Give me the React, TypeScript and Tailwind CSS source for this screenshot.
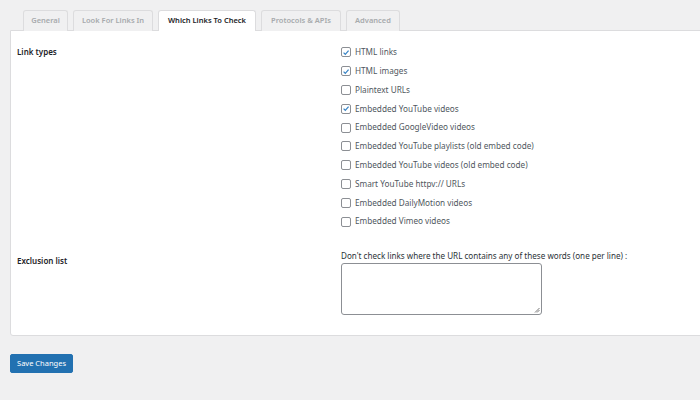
import React from 'react';

const tabs = [
  { label: 'General', w: 'w-[45px]' },
  { label: 'Look For Links In', w: 'w-[80px]' },
  { label: 'Which Links To Check', w: 'w-[98px]', active: true },
  { label: 'Protocols & APIs', w: 'w-[80px]' },
  { label: 'Advanced', w: 'w-[54px]' },
];

const linkTypes = [
  { label: 'HTML links', checked: true },
  { label: 'HTML images', checked: true },
  { label: 'Plaintext URLs' },
  { label: 'Embedded YouTube videos', checked: true },
  { label: 'Embedded GoogleVideo videos' },
  { label: 'Embedded YouTube playlists (old embed code)' },
  { label: 'Embedded YouTube videos (old embed code)' },
  { label: 'Smart YouTube httpv:// URLs' },
  { label: 'Embedded DailyMotion videos' },
  { label: 'Embedded Vimeo videos' },
];

const Checkbox: React.FC<{ checked?: boolean }> = ({ checked }) => (
  <span className="flex h-[10px] w-[10px] shrink-0 items-center justify-center rounded-[2px] border border-[#8c8f94] bg-white">
    {checked && (
      <svg viewBox="0 0 10 10" className="h-[9px] w-[9px]">
        <path d="M2 5.2 L4.1 7.3 L8.2 2.6" fill="none" stroke="#3582c4" strokeWidth="1.5" />
      </svg>
    )}
  </span>
);

export default function App() {
  return (
    <div
      className="h-[400px] w-[700px] overflow-hidden bg-[#f0f0f1] text-[#1d2327]"
      style={{ fontFamily: '"Noto Sans", "Open Sans", sans-serif' }}
    >
      {/* Tabs */}
      <div className="flex gap-[5px] pl-[23px] pt-[10px]">
        {tabs.map((t) => (
          <div
            key={t.label}
            className={
              'flex h-[21px] items-center justify-center rounded-t-[3px] border border-b-0 text-[7.5px] font-semibold ' +
              t.w +
              (t.active
                ? ' relative z-10 border-[#dcdcde] bg-white text-[#1d2327]'
                : ' border-[#dcdcde] bg-[#f0f0f1] text-[#a7aaad]')
            }
          >
            {t.label}
          </div>
        ))}
      </div>

      {/* Panel */}
      <div className="-mt-px ml-[10px] h-[306px] w-[700px] rounded-bl-[3px] border border-[#dcdcde] bg-white">
        <div className="flex pt-[12px]">
          <div className="w-[330px] pl-[6px] pt-[3px] text-[8px] font-semibold">Link types</div>
          <div className="flex flex-col">
            {linkTypes.map((l) => (
              <div key={l.label} className="flex h-[18.8px] items-center gap-[4px]">
                <Checkbox checked={l.checked} />
                <span className="text-[8.2px] text-[#50575e]">{l.label}</span>
              </div>
            ))}
          </div>
        </div>

        <div className="mt-[19px] flex">
          <div className="w-[330px] pl-[6px] pt-[5px] text-[8px] font-semibold">Exclusion list</div>
          <div className="flex flex-col">
            <div className="text-[8.1px] text-[#2c3338]">
              Don't check links where the URL contains any of these words (one per line) :
            </div>
            <div className="relative mt-[1px] h-[52px] w-[201px] rounded-[3px] border border-[#8c8f94] bg-white">
              <svg viewBox="0 0 6 6" className="absolute bottom-[1px] right-[1px] h-[6px] w-[6px]">
                <path d="M1 5.5 L5.5 1 M3 5.5 L5.5 3" stroke="#555" strokeWidth="0.8" />
              </svg>
            </div>
          </div>
        </div>
      </div>

      {/* Save */}
      <div className="ml-[10px] mt-[12px]">
        <button className="h-[19px] w-[63px] rounded-[2px] border border-[#2271b1] bg-[#2271b1] text-[7.5px] text-white">
          Save Changes
        </button>
      </div>
    </div>
  );
}
